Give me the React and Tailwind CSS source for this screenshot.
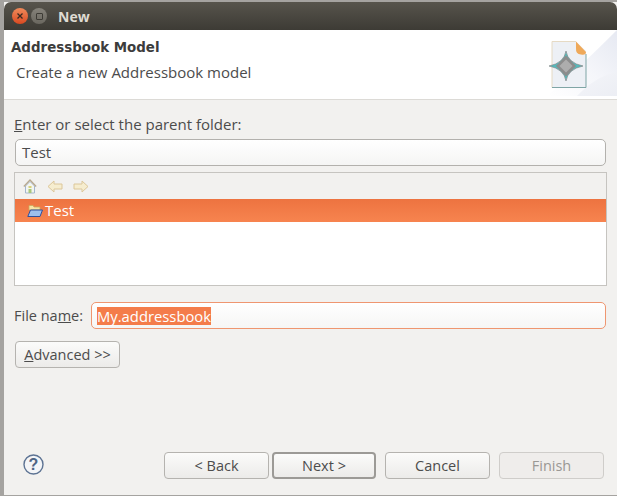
const ui = { fontFamily: '"Open Sans", "Noto Sans", sans-serif' };

function PushButton({ children, disabled, primary, className, width = "w-[105px]" }) {
  const tone = disabled
    ? "border-[#cfcdca] bg-[#efedeb] text-[#9a9894]"
    : primary
      ? "border-2 border-[#9c9a96] bg-gradient-to-b from-[#fbfbfa] to-[#ecebe9] text-[#4c4c4c]"
      : "border-[#b5b3af] bg-gradient-to-b from-[#fbfbfa] to-[#ecebe9] text-[#4c4c4c]";
  return (
    <div className={`flex h-[27px] items-center justify-center rounded-[4px] border text-[14.5px] ${width} ${tone} ${className || ""}`}>
      {children}
    </div>
  );
}

function HomeIcon() {
  return (
    <svg width="14" height="15" viewBox="0 0 14 15">
      <path d="M2.5 7 L7 2.5 L11.5 7 L11.5 14 L2.5 14 Z" fill="#f3f5f0" stroke="#a4b6cf" />
      <path d="M0.8 7.5 L7 1 L13.2 7.5" stroke="#b8a98f" strokeWidth="1.3" fill="none" />
      <rect x="5.5" y="7" width="3" height="2" fill="#d8d27a" />
      <rect x="5.5" y="10" width="3" height="4" fill="#a9c77c" />
    </svg>
  );
}

function ArrowIcon({ flip }) {
  return (
    <svg width="16" height="13" viewBox="0 0 16 13" className={flip ? "-scale-x-100" : ""}>
      <path d="M1 6.5 L7 1 L7 4 L15 4 L15 9 L7 9 L7 12 Z" fill="#f6edcf" stroke="#dcc79a" />
    </svg>
  );
}

function FolderIcon() {
  return (
    <svg width="16" height="14" viewBox="0 0 16 14">
      <path d="M2 1.5 L6 1.5 L7 3 L13 3 L13 6 L2 6 Z" fill="#f8e4a6" stroke="#c9a85a" strokeWidth="0.8" />
      <path d="M3.5 6 L15.5 6 L13 12.5 L0.8 12.5 Z" fill="#9dbfee" stroke="#2f4f9c" />
    </svg>
  );
}

// banner art, 70x68, drawn in place
function WizardBanner() {
  return (
    <svg width="70" height="68" viewBox="0 0 70 68">
      <defs>
        <linearGradient id="sweep" x1="0" y1="1" x2="1" y2="0">
          <stop offset="0" stopColor="#ffffff" />
          <stop offset="0.5" stopColor="#f5f6fa" />
          <stop offset="1" stopColor="#e6e9f2" />
        </linearGradient>
        <linearGradient id="low" x1="0" y1="0" x2="1" y2="1">
          <stop offset="0" stopColor="#f4f5f9" />
          <stop offset="1" stopColor="#eceef4" />
        </linearGradient>
      </defs>
      <path d="M0 66 Q30 40 70 0 L70 66 Z" fill="url(#sweep)" />
      <path d="M34 62 Q50 46 70 42 L70 66 L30 66 Z" fill="url(#low)" />
      <path d="M5 11.5 L29 11.5 L39 21 L39 57.5 L5 57.5 Z" fill="#edf0f5" />
      <path d="M5 57.5 L5 11.5 L29 11.5" fill="none" stroke="#e6dac4" />
      <path d="M5 57.5 L39 57.5 L39 24" fill="none" stroke="#7fa5a5" />
      <path d="M29 11.5 L39 22 Q39 25.5 34 24.5 Q28.5 24 29 18 Z" fill="#efa95a" />
      <path d="M19 21 Q21 33 36 36 Q21 39 19 51 Q17 39 2 36 Q17 33 19 21 Z" fill="#55b9bb" stroke="#7a7a7a" strokeWidth="0.6" />
      <path d="M19 25.5 L29 36 L19 46.5 L9 36 Z" fill="#8c8c8c" />
      <path d="M19 29.5 L25.5 36 L19 42.5 L12.5 36 Z" fill="#adadad" />
    </svg>
  );
}

function TitleBar() {
  return (
    <div className="flex h-[28px] shrink-0 items-center rounded-t-[7px] bg-gradient-to-b from-[#57544c] to-[#3d3b35] pl-[8px]">
      <div className="flex h-[16px] w-[16px] items-center justify-center rounded-full bg-gradient-to-b from-[#f08a5a] to-[#d9481f]">
        <svg width="8" height="8" viewBox="0 0 8 8">
          <path d="M1.5 1.5 L6.5 6.5 M6.5 1.5 L1.5 6.5" stroke="#3a2a22" strokeWidth="1.3" />
        </svg>
      </div>
      <div className="ml-[3px] flex h-[16px] w-[16px] items-center justify-center rounded-full bg-gradient-to-b from-[#85827a] to-[#6a675f]">
        <div className="h-[7px] w-[7px] rounded-[1px] border border-[#3d3b35]" />
      </div>
      <span className="ml-[11px] text-[14px] font-bold text-[#dfdbd2]">New</span>
    </div>
  );
}

function Header() {
  return (
    <div className="flex h-[70px] shrink-0 border-b border-[#dcdad6] bg-white">
      <div className="flex-1 pl-[7px] pt-[9px]">
        <div className="text-[13.4px] font-bold leading-[18px] text-[#3c3c3c]" style={{ fontFamily: '"DejaVu Sans", sans-serif' }}>Addressbook Model</div>
        <div className="mt-[5px] pl-[5px] text-[15px] leading-[20px] text-[#4c4c4c]">Create a new Addressbook model</div>
      </div>
      <div className="flex w-[70px] items-start">
        <WizardBanner />
      </div>
    </div>
  );
}

export default function App() {
  return (
    <div className="h-[496px] w-[617px] overflow-hidden bg-[#a5a3a0] pl-[4px] pt-[2px] text-[#4c4c4c]" style={ui}>
      <div className="flex h-[493px] w-[613px] flex-col bg-[#f2f1ef]">
        <TitleBar />
        <Header />
        <div className="flex flex-1 flex-col pl-[10px]">
          <div className="mt-[14px] text-[15px] leading-[20px]"><span className="underline">E</span>nter or select the parent folder:</div>
          <div className="ml-[1px] mt-[5px] flex h-[27px] w-[591px] items-center rounded-[5px] border border-[#b3b1ad] bg-gradient-to-b from-white to-[#f5f5f4] pl-[6px] text-[15px]">Test</div>
          <div className="mt-[6px] flex h-[114px] w-[593px] flex-col border border-[#c6c4c0] bg-white">
            <div className="flex h-[26px] items-center gap-[10px] bg-[#f2f1ef] pl-[8px]">
              <HomeIcon />
              <ArrowIcon />
              <ArrowIcon flip />
            </div>
            <div className="flex h-[23px] items-center gap-[2px] bg-gradient-to-b from-[#ed7340] to-[#f7844f] pl-[12px] text-[15px] text-white">
              <FolderIcon />
              Test
            </div>
          </div>
          <div className="mt-[16px] flex items-center">
            <span className="w-[77px] text-[14.5px]">File na<span className="underline">m</span>e:</span>
            <div className="flex h-[27px] w-[515px] items-center rounded-[5px] border border-[#ef9670] bg-gradient-to-b from-white to-[#f6f6f5] pl-[5px] text-[14.8px]">
              <span className="bg-[#f47c4a] leading-[18px] text-white">My.addressbook</span>
            </div>
          </div>
          <PushButton className="ml-[1px] mt-[12px]"><span><span className="underline">A</span>dvanced &gt;&gt;</span></PushButton>
          <div className="mt-[84px] flex items-center pl-[9px]">
            <svg width="21" height="21" viewBox="0 0 21 21" className="-translate-y-[1px]">
              <circle cx="10.5" cy="10.5" r="9.5" fill="#f4f5f7" stroke="#5d7393" strokeWidth="1.4" />
              <text x="10.5" y="16" textAnchor="middle" fontSize="16" fontWeight="700" fill="#4f6585" fontFamily="Liberation Sans, sans-serif">?</text>
            </svg>
            <div className="ml-[120px] flex items-center">
              <PushButton>&lt; Back</PushButton>
              <PushButton primary width="w-[104px]" className="ml-[3px]">Next &gt;</PushButton>
              <PushButton className="ml-[9px]">Cancel</PushButton>
              <PushButton disabled className="ml-[9px]">Finish</PushButton>
            </div>
          </div>
        </div>
      </div>
    </div>
  );
}
